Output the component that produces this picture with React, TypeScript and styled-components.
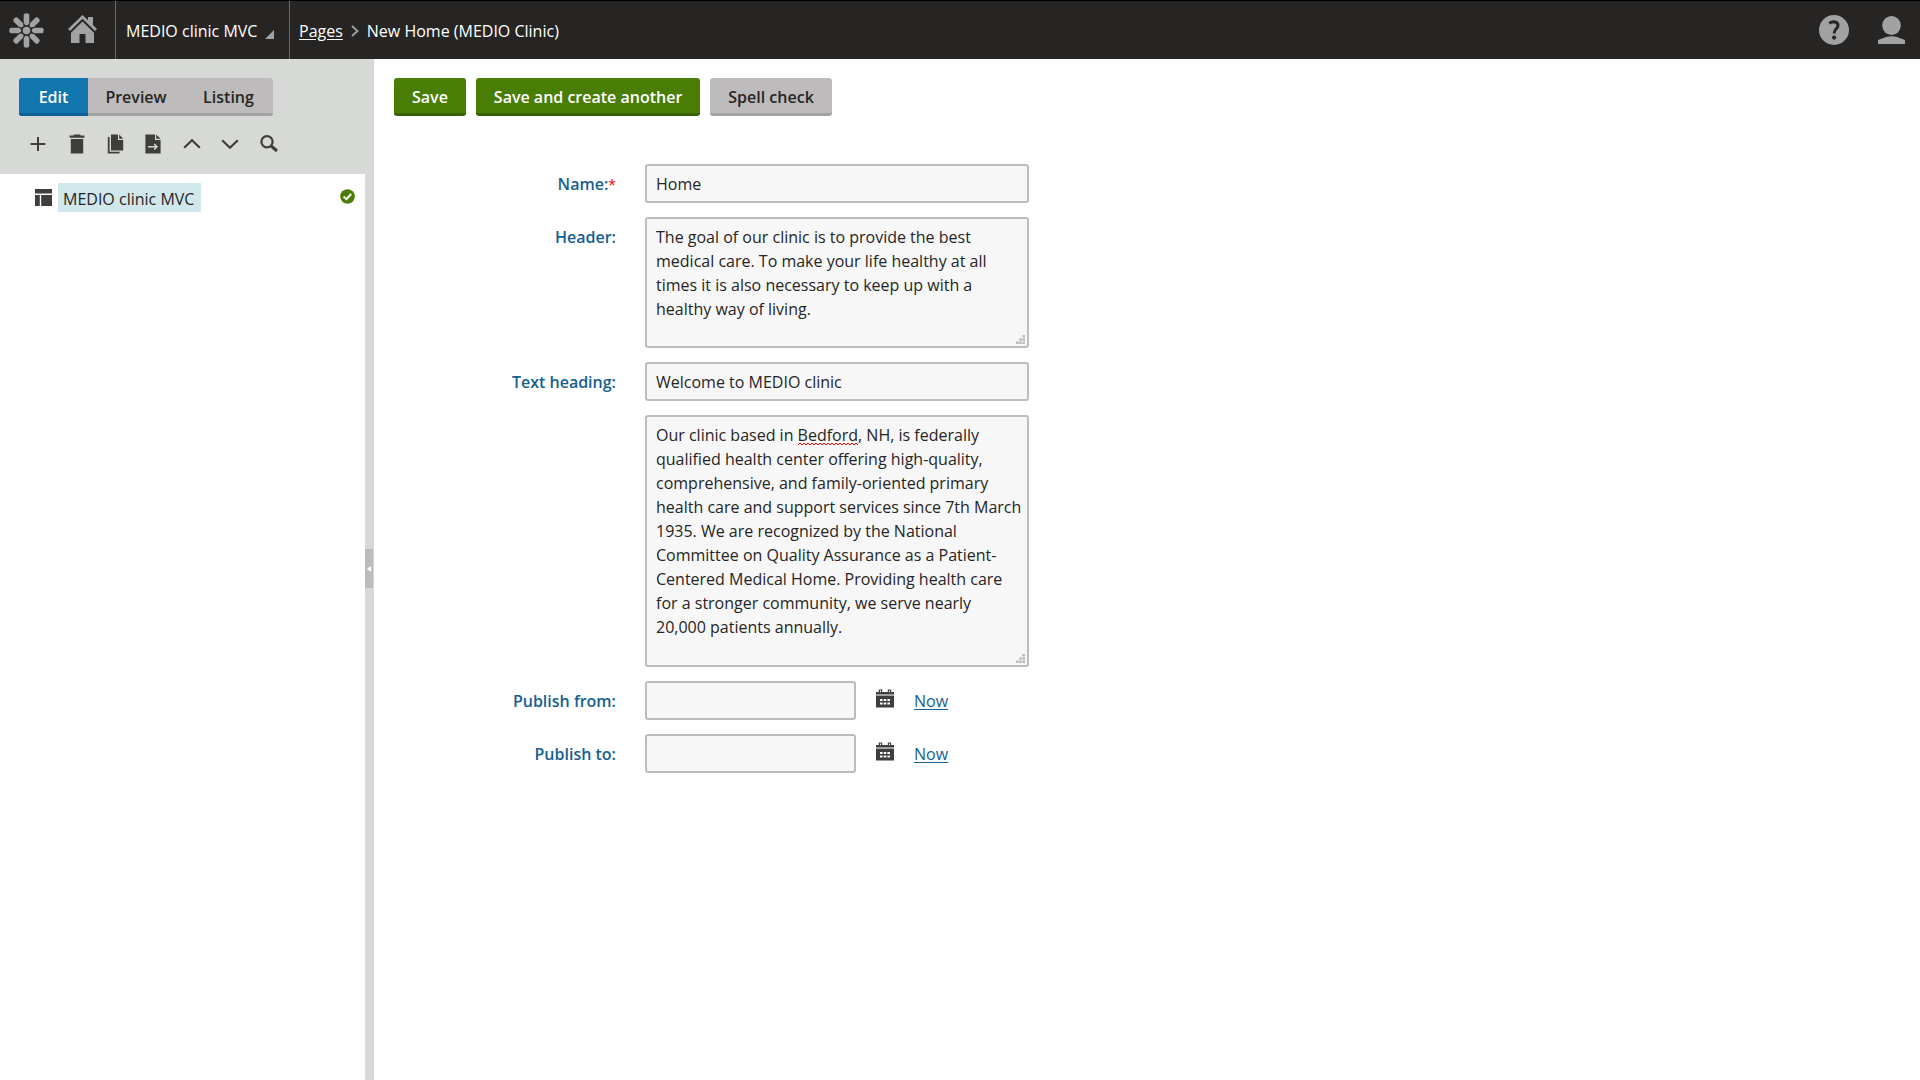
import React, { useState } from 'react';
import styled, { createGlobalStyle, css } from 'styled-components';

const GlobalStyle = createGlobalStyle`
  *, *::before, *::after { box-sizing: border-box; }
  body {
    margin: 0;
    background: #fff;
    color: #262524;
    font: 16px/24px 'Open Sans', 'Noto Sans', sans-serif;
  }
  button, input, textarea { font: inherit; color: inherit; }
`;

const Page = styled.div`
  display: flex;
  flex-direction: column;
  min-height: 100vh;
`;

const TopBar = styled.header`
  display: flex;
  align-items: stretch;
  height: 59px;
  border-top: 1px solid #000;
  background: #262524;
  color: #fff;
`;

const IconLink = styled.a<{ $width: number }>`
  display: flex;
  align-items: center;
  justify-content: center;
  width: ${(p) => p.$width}px;
  color: #a3a2a2;
`;

const HomeLink = styled(IconLink)`
  padding: 0 4px 2px 0;
`;

const SiteButton = styled.button`
  display: flex;
  align-items: center;
  gap: 8px;
  width: 175px;
  padding: 2px 0 0 10px;
  border: solid #6b6a6a;
  border-width: 0 1px;
  background: none;
  color: #fff;
  white-space: nowrap;
`;

const Triangle = styled.svg`
  margin-top: 6px;
`;

const Breadcrumbs = styled.nav`
  display: flex;
  flex: 1;
  align-items: center;
  gap: 8px;
  padding: 2px 0 0 9px;

  a { color: #fff; text-underline-offset: 2px; }
`;

const Body = styled.div`
  display: flex;
  flex: 1;
`;

const Sidebar = styled.aside`
  display: flex;
  flex-direction: column;
  width: 365px;
`;

const TreeTools = styled.div`
  height: 115px;
  padding: 19px 20px 0 19px;
  background: #d6d9d6;
`;

const Tabs = styled.div`
  display: grid;
  grid-template-columns: 69px 1fr 89px;
  width: 254px;
  border-radius: 3px;
  overflow: hidden;
`;

const Tab = styled.button<{ $active?: boolean }>`
  height: 38px;
  padding: 2px 0 0;
  border: 0;
  border-bottom: 3px solid ${(p) => (p.$active ? '#0f6194' : '#a3a2a2')};
  background: ${(p) => (p.$active ? '#1175ae' : '#bdbbbb')};
  color: ${(p) => (p.$active ? '#fff' : '#262524')};
  font-weight: 600;
`;

const IconRow = styled.div`
  display: flex;
  width: 269px;
  margin-top: 13px;
`;

const ToolButton = styled.button`
  display: flex;
  flex: 1;
  align-items: center;
  justify-content: center;
  height: 30px;
  padding: 0;
  border: 0;
  background: none;
  color: #403e3d;
`;

const Tree = styled.ul`
  margin: 0;
  padding: 9px 10px 0 35px;
  list-style: none;
`;

const TreeItem = styled.li`
  display: flex;
  align-items: center;
  gap: 6px;
  color: #403e3d;
`;

const TreeLink = styled.a`
  padding: 4px 7px 1px 5px;
  background: #d0e7ec;
  color: #262524;
  text-decoration: none;
`;

const Published = styled.svg`
  margin: 0 0 2px auto;
`;

const Splitter = styled.div`
  display: flex;
  align-items: center;
  width: 9px;
  padding-bottom: 2px;
  background: #d6d9d6;
`;

const Grip = styled.button`
  display: flex;
  align-items: center;
  justify-content: center;
  width: 8px;
  height: 39px;
  padding: 0;
  border: 0;
  background: #bdbbbb;
`;

const Content = styled.main`
  flex: 1;
  padding: 19px 20px;
`;

const Actions = styled.div`
  display: flex;
  gap: 10px;
`;

const ActionButton = styled.button<{ $primary?: boolean }>`
  height: 38px;
  padding: 2px 18px 0;
  border: 0;
  border-bottom: 3px solid ${(p) => (p.$primary ? '#376100' : '#a3a2a2')};
  border-radius: 3px;
  background: ${(p) => (p.$primary ? '#497d04' : '#bdbbbb')};
  color: ${(p) => (p.$primary ? '#fff' : '#262524')};
  font-weight: 600;
`;

const Form = styled.form`
  display: flex;
  flex-direction: column;
  gap: 14px;
  margin-top: 48px;
`;

const Row = styled.div`
  display: grid;
  grid-template-columns: 222px minmax(0, 384px);
  column-gap: 29px;
`;

const Label = styled.label`
  padding-top: 8px;
  color: #165f92;
  font-weight: 600;
  text-align: right;
`;

const Required = styled.span`
  color: #f00;
  font-weight: 400;
  font-size: 14px;
`;

const fieldStyle = css`
  display: block;
  border: 2px solid #bdbbbb;
  border-radius: 3px;
  background: #f7f7f7;
  outline: 0;
`;

const TextInput = styled.input<{ $short?: boolean }>`
  ${fieldStyle}
  width: ${(p) => (p.$short ? '211px' : '100%')};
  height: 39px;
  padding: 0 9px;
`;

const AreaBox = styled.div`
  position: relative;
  grid-column: 2;
`;

const TextArea = styled.textarea<{ $height: number }>`
  ${fieldStyle}
  width: 100%;
  height: ${(p) => p.$height}px;
  padding: 6px 2px 5px 9px;
  overflow: hidden;
  resize: vertical;

  &::-webkit-resizer { display: none; }
`;

const ResizeDots = styled.svg`
  position: absolute;
  right: 4px;
  bottom: 4px;
  pointer-events: none;
`;

const Squiggle = styled.svg`
  position: absolute;
  top: 27px;
  left: 153px;
  pointer-events: none;
`;

const DateFields = styled.div`
  display: flex;
  align-items: flex-start;
`;

const CalendarButton = styled.button`
  margin: 8px 20px 0;
  padding: 0;
  border: 0;
  background: none;
  color: #403e3d;
  line-height: 0;
`;

const NowLink = styled.a`
  padding-top: 8px;
  color: #165f92;
  text-underline-offset: 2px;
`;

const Logo = () => (
  <svg width="35" height="35" viewBox="0 0 35 35" fill="currentColor">
    <circle cx="17.5" cy="17.5" r="3.8" />
    {[0, 45, 90, 135, 180, 225, 270, 315].map((a) => (
      <path key={a} transform={`rotate(${a} 17.5 17.5)`} d="M14.7 2.2Q14.7 .3 17.5 .3T20.3 2.2V9.9L18.6 12.2H16.4L14.7 9.9Z" />
    ))}
  </svg>
);

const Home = () => (
  <svg width="29" height="28" viewBox="0 0 29 28" fill="currentColor">
    <path d="M14.5 0L20 5.2V2H25V10L29 14L27 16L14.5 3.8L2 16L0 14Z" />
    <path d="M14.5 6.5L26 17.7V28H17.5V19H11.5V28H3V17.7Z" />
  </svg>
);

const HelpIcon = () => (
  <svg width="30" height="30" viewBox="0 0 30 30">
    <circle cx="15" cy="15" r="15" fill="currentColor" />
    <path d="M10.2 8.2Q12.4 6.8 15 6.8Q19 7 19 10.6Q19 12.6 16.8 14.3Q15.2 15.6 15.2 18.6" fill="none" stroke="#262524" strokeWidth="3" />
    <circle cx="15.1" cy="22.6" r="2.1" fill="#262524" />
  </svg>
);

const UserIcon = () => (
  <svg width="27" height="28" viewBox="0 0 27 28" fill="currentColor">
    <ellipse cx="13.5" cy="9.5" rx="9.3" ry="9.5" />
    <path d="M0 28V24Q4 22.4 8 21Q13.5 19.6 19 21Q23 22.4 27 24V28Z" />
  </svg>
);

const toolIcons: { name: string; art: React.ReactNode }[] = [
  { name: 'New page', art: <path d="M10 3V17M2.6 10H17.4" fill="none" stroke="currentColor" strokeWidth="2" /> },
  { name: 'Delete', art: <path d="M2.6 1.6H6.6V.4H13.4V1.6H17.4V3.8H2.6ZM3.8 5H16.2V19.6H3.8Z" /> },
  { name: 'Copy', art: <path d="M6 .4H13V6H18.2V16.4H6ZM14.2 .4L18.2 4.8H14.2ZM2.8 3H4.6V17.8H14.6V19.6H2.8Z" /> },
  {
    name: 'Move',
    art: (
      <>
        <path d="M2.4 .4H12V6H17.6V19.6H2.4ZM13.2 .4L17.6 4.8H13.2Z" />
        <path d="M5 12.8H14M11.2 10L14 12.8L11.2 15.6" fill="none" stroke="#d6d9d6" strokeWidth="1.4" />
      </>
    ),
  },
  { name: 'Move up', art: <path d="M2.2 13.8L10 6.2L17.8 13.8" fill="none" stroke="currentColor" strokeWidth="2.2" /> },
  { name: 'Move down', art: <path d="M2.2 6.2L10 13.8L17.8 6.2" fill="none" stroke="currentColor" strokeWidth="2.2" /> },
  {
    name: 'Search',
    art: (
      <g fill="none" stroke="currentColor">
        <circle cx="8" cy="7.8" r="5.6" strokeWidth="2.2" />
        <path d="M12.2 12L18 17" strokeWidth="3" />
      </g>
    ),
  },
];

const Calendar = () => (
  <svg width="18" height="19" viewBox="0 0 18 19">
    <path d="M0 3H18V5.6H0ZM0 7H18V18.4H0Z" fill="currentColor" />
    <path d="M0 5.6H18V7H0Z" fill="#a3a2a2" />
    <path d="M3.4 1H5.6V3.8H3.4ZM12.4 1H14.6V3.8H12.4Z" fill="#fff" stroke="currentColor" strokeWidth="1.2" />
    <path d="M4 10H6.6V12H4ZM7.7 10H10.3V12H7.7ZM11.4 10H14V12H11.4ZM4 13.4H6.6V15.4H4ZM7.7 13.4H10.3V15.4H7.7ZM11.4 13.4H14V15.4H11.4Z" fill="#fff" />
  </svg>
);

const Dots = () => (
  <ResizeDots width="9" height="9" viewBox="0 0 9 9" fill="#bdbbbb" aria-hidden="true">
    <path d="M6.4 0H9V2.6H6.4ZM3.2 3.2H5.8V5.8H3.2ZM6.4 3.2H9V5.8H6.4ZM0 6.4H2.6V9H0ZM3.2 6.4H5.8V9H3.2ZM6.4 6.4H9V9H6.4Z" />
  </ResizeDots>
);

const headerText =
  'The goal of our clinic is to provide the best medical care. To make your life healthy at all times it is also necessary to keep up with a healthy way of living.';
const bodyText =
  'Our clinic based in Bedford, NH, is federally qualified health center offering high-quality, comprehensive, and family-oriented primary health care and support services since 7th March 1935. We are recognized by the National Committee on Quality Assurance as a Patient-Centered Medical Home. Providing health care for a stronger community, we serve nearly 20,000 patients annually.';

const DateRow = ({ id, label }: { id: string; label: string }) => (
  <Row>
    <Label htmlFor={id}>{label}</Label>
    <DateFields>
      <TextInput id={id} $short />
      <CalendarButton type="button" aria-label="Choose date"><Calendar /></CalendarButton>
      <NowLink href="#now">Now</NowLink>
    </DateFields>
  </Row>
);

export default function App() {
  const [tab, setTab] = useState('Edit');
  return (
    <Page>
      <GlobalStyle />
      <TopBar>
        <IconLink $width={53} href="#menu" aria-label="Applications"><Logo /></IconLink>
        <HomeLink $width={62} href="#home" aria-label="Dashboard"><Home /></HomeLink>
        <SiteButton type="button">
          MEDIO clinic MVC
          <Triangle width="9" height="9" viewBox="0 0 9 9" fill="#a3a2a2"><path d="M9 0V9H0Z" /></Triangle>
        </SiteButton>
        <Breadcrumbs>
          <a href="#pages">Pages</a>
          <svg width="8" height="12" viewBox="0 0 8 12" fill="none" stroke="#a3a2a2" strokeWidth="1.8"><path d="M1 1L6.5 6L1 11" /></svg>
          <span>New Home (MEDIO Clinic)</span>
        </Breadcrumbs>
        <IconLink $width={58} href="#help" aria-label="Help"><HelpIcon /></IconLink>
        <IconLink $width={57} href="#user" aria-label="User"><UserIcon /></IconLink>
      </TopBar>
      <Body>
        <Sidebar>
          <TreeTools>
            <Tabs>
              {['Edit', 'Preview', 'Listing'].map((t) => (
                <Tab key={t} type="button" $active={t === tab} onClick={() => setTab(t)}>{t}</Tab>
              ))}
            </Tabs>
            <IconRow>
              {toolIcons.map((i) => (
                <ToolButton key={i.name} type="button" aria-label={i.name}>
                  <svg width="20" height="20" viewBox="0 0 20 20" fill="currentColor">{i.art}</svg>
                </ToolButton>
              ))}
            </IconRow>
          </TreeTools>
          <Tree>
            <TreeItem>
              <svg width="17" height="17" viewBox="0 0 17 17" fill="currentColor"><path d="M0 0H17V4.6H0ZM0 6H4.8V17H0ZM6.2 6H17V17H6.2Z" /></svg>
              <TreeLink href="#root-page">MEDIO clinic MVC</TreeLink>
              <Published width="15" height="15" viewBox="0 0 15 15">
                <circle cx="7.5" cy="7.5" r="7.3" fill="#497d04" />
                <path d="M3.6 7.6L6.4 10.2L11.2 5" fill="none" stroke="#fff" strokeWidth="2" />
              </Published>
            </TreeItem>
          </Tree>
        </Sidebar>
        <Splitter>
          <Grip type="button" aria-label="Collapse tree">
            <svg width="4" height="6" viewBox="0 0 4 6" fill="#fff"><path d="M4 0V6L0 3Z" /></svg>
          </Grip>
        </Splitter>
        <Content>
          <Actions>
            <ActionButton type="button" $primary>Save</ActionButton>
            <ActionButton type="button" $primary>Save and create another</ActionButton>
            <ActionButton type="button">Spell check</ActionButton>
          </Actions>
          <Form>
            <Row>
              <Label htmlFor="name">Name:<Required>*</Required></Label>
              <TextInput id="name" defaultValue="Home" />
            </Row>
            <Row>
              <Label htmlFor="header">Header:</Label>
              <AreaBox>
                <TextArea id="header" $height={131} spellCheck={false} defaultValue={headerText} />
                <Dots />
              </AreaBox>
            </Row>
            <Row>
              <Label htmlFor="heading">Text heading:</Label>
              <TextInput id="heading" defaultValue="Welcome to MEDIO clinic" />
            </Row>
            <Row>
              <AreaBox>
                <TextArea aria-label="Text" $height={252} spellCheck={false} defaultValue={bodyText} />
                <Squiggle width="60" height="4" viewBox="0 0 60 4" fill="none" stroke="#f00">
                  <path d={'M0 3' + 'l2 -2l2 2'.repeat(15)} />
                </Squiggle>
                <Dots />
              </AreaBox>
            </Row>
            <DateRow id="publish-from" label="Publish from:" />
            <DateRow id="publish-to" label="Publish to:" />
          </Form>
        </Content>
      </Body>
    </Page>
  );
}
